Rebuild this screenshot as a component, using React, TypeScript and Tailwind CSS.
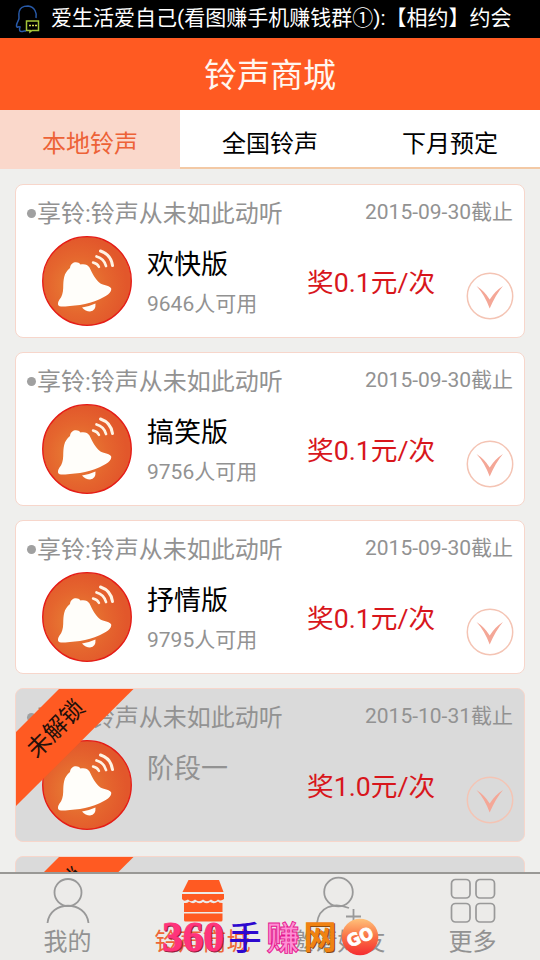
import React from "react";

type Ring = { name: string; count?: string; date: string; reward: string; locked?: boolean };

const rings: Ring[] = [
  { name: "欢快版", count: "9646人可用", date: "2015-09-30截止", reward: "奖0.1元/次" },
  { name: "搞笑版", count: "9756人可用", date: "2015-09-30截止", reward: "奖0.1元/次" },
  { name: "抒情版", count: "9795人可用", date: "2015-09-30截止", reward: "奖0.1元/次" },
  { name: "阶段一", date: "2015-10-31截止", reward: "奖1.0元/次", locked: true },
  { name: "阶段二", date: "2015-10-31截止", reward: "奖1.0元/次", locked: true },
];

function BellIcon() {
  return (
    <svg width="92" height="92" viewBox="0 0 92 92" className="shrink-0">
      <defs>
        <radialGradient id="bell" cx="0.4" cy="0.55" r="0.55">
          <stop offset="0" stopColor="#e88436" />
          <stop offset="0.6" stopColor="#e5662e" />
          <stop offset="1" stopColor="#e2572b" />
        </radialGradient>
      </defs>
      <circle cx="46" cy="46" r="44.3" fill="url(#bell)" stroke="#e51c17" strokeWidth="1.3" />
      <path
        d="M29 33C29.500 26.500 37 25.500 39.500 29.500C43 28.500 47 29.500 48.500 32.500C51 38 54.500 45 59.500 48.500C63.500 50.500 69.500 51 70.200 53.500C71 57.500 65 61.500 58 64.500C47 69.500 31 71.500 20 71.500C16 71.500 16.500 67.500 18.500 64.500C21 61.500 22 58 22.200 53C22.500 44 22.500 38.500 29 33Z"
        fill="#fffefa"
      />
      <path d="M41 72.500Q48 71.500 54.500 68.500Q55 76 49 76.500Q44.500 76.500 41 72.500Z" fill="#fffefa" />
      <g fill="none" stroke="#fff3e4" strokeLinecap="round">
        <path d="M52 27.500Q56.500 28.500 58 32" strokeWidth="2.400" />
        <path d="M55.500 21.500Q63 23.500 65 31" strokeWidth="2.700" />
        <path d="M59.500 16Q70 19.500 71.500 30.500" strokeWidth="3" />
      </g>
    </svg>
  );
}

function ExpandIcon() {
  return (
    <svg width="48" height="48" viewBox="0 0 48 48">
      <circle cx="24" cy="24" r="22.700" fill="none" stroke="#f4c4b4" strokeWidth="1.500" />
      <path d="M10.500 14Q18.500 19 23.700 27.500Q29 19 37 14Q30 22 23.700 36.500Q18.500 22.500 10.500 14Z" fill="#f4a797" />
    </svg>
  );
}

function Ribbon() {
  return (
    <div className="absolute -left-px -top-px h-[120px] w-[120px]">
      <svg width="120" height="120" viewBox="0 0 120 120">
        <path d="M45 0H119.500L0 119V45Z" fill="#ff5a22" />
        <text
          x="41"
          y="48.500"
          transform="rotate(-45 41 41)"
          textAnchor="middle"
          fontSize="23.500"
          fill="#24100a"
        >
          未解锁
        </text>
      </svg>
    </div>
  );
}

function Card({ ring }: { ring: Ring }) {
  const skin = ring.locked ? "bg-[#dadada]" : "bg-white";
  return (
    <article className={`relative h-[154px] shrink-0 overflow-hidden rounded-[8px] border border-[#f7d6cb] ${skin}`}>
      <div className="flex h-[50px] items-start justify-between pl-[11px] pr-[11px] pt-[12px] text-[#929292]">
        <span className="flex text-[24px] leading-[34px]">
          <span className="mr-[1px] mt-[12px] size-[9px] rounded-full bg-[#a0a0a0]" />
          享铃:铃声从未如此动听
        </span>
        <span className="text-[21px] leading-[30px]">{ring.date}</span>
      </div>
      <div className="flex pl-[25px]">
        <BellIcon />
        <div className="ml-[14px] w-[160px] pt-[11px]">
          <div className={`text-[27px] leading-[38px] ${ring.locked ? "text-[#929292]" : "text-black"}`}>{ring.name}</div>
          <div className="mt-[5px] text-[21px] leading-[30px] text-[#929292]">{ring.count}</div>
        </div>
        <div className="w-[159px] pt-[28px] text-[26.7px] leading-[40px] text-[#d8161c]">{ring.reward}</div>
        <div className="pt-[37px]">
          <ExpandIcon />
        </div>
      </div>
      {ring.locked && <Ribbon />}
    </article>
  );
}

function PersonIcon() {
  return (
    <svg width="60" height="51" viewBox="0 0 60 51" fill="none" stroke="#999" strokeWidth="1.800">
      <circle cx="30" cy="18.500" r="13.500" />
      <path d="M9.500 49C12 26 48 26 50.500 49" />
    </svg>
  );
}

function ShopIcon() {
  return (
    <svg width="60" height="51" viewBox="0 0 60 51" fill="#ff5a22">
      <path d="M15.500 6H46L50.500 18H9.500Z" />
      <path d="M9 20H51V25Q48 27.500 45 25.500Q42 29 38 25.500Q34 29 30 25.500Q26 29 22 25.500Q18 29 15 25.500Q11 28 9 25Z" />
      <path d="M11 29Q15 29 16 27.500Q20 30.500 23 28Q27 30.500 30 28Q34 30.500 37 28Q41 30.500 45 27.500Q46 29 49.500 29V38H11Z" />
      <path d="M11 39.500H49.500V46Q49.500 47.500 48 47.500H12.500Q11 47.500 11 46Z" />
    </svg>
  );
}

function InviteIcon() {
  return (
    <svg width="60" height="51" viewBox="0 0 60 51" fill="none" stroke="#999" strokeWidth="1.800">
      <circle cx="30.500" cy="18" r="14.300" />
      <path d="M9 49C11 33 25 28 41 34M45.500 35V51M38 42.500H53" />
    </svg>
  );
}

function GridIcon() {
  return (
    <svg width="60" height="51" viewBox="0 0 60 51" fill="none" stroke="#999" strokeWidth="1.700">
      <rect x="8.500" y="5.500" width="18.500" height="18.500" rx="4" />
      <rect x="33" y="5.500" width="18.500" height="18.500" rx="4" />
      <rect x="8.500" y="29.500" width="18.500" height="18.500" rx="4" />
      <rect x="33" y="29.500" width="18.500" height="18.500" rx="4" />
    </svg>
  );
}

function Watermark() {
  return (
    <svg className="absolute bottom-0 left-[155px]" width="230" height="45" viewBox="155 915 230 45">
      <defs>
        <linearGradient id="ball" x1="0" y1="0" x2="0" y2="1">
          <stop offset="0" stopColor="#ffc27a" />
          <stop offset="0.5" stopColor="#fa7044" />
          <stop offset="1" stopColor="#f52c31" />
        </linearGradient>
      </defs>
      <g fontFamily="Liberation Serif, serif" fontWeight="700" fontSize="43">
        <text x="163" y="952" textLength="62" lengthAdjust="spacingAndGlyphs" fill="#8c1737" stroke="#8c1737" strokeWidth="0.800">360</text>
        <text x="162" y="951" textLength="62" lengthAdjust="spacingAndGlyphs" fill="#ff347b" stroke="#ff347b" strokeWidth="0.800">360</text>
      </g>
      <g fontSize="33" fontWeight="700" fontFamily="Noto Sans CJK SC, sans-serif">
        <text x="228.500" y="949.500" fill="#2d08cf" fontWeight="500">手</text>
        <text x="266.500" y="949.500" fill="#ff8fd4" stroke="#e5178f" strokeWidth="0.900">赚</text>
        <text x="304.500" y="949.500" fill="#8b4b12">网</text>
        <text x="303.500" y="948.500" fill="#f08212">网</text>
      </g>
      <circle cx="360" cy="937" r="18.300" fill="url(#ball)" />
      <text
        x="360"
        y="943"
        transform="rotate(-22 360 937)"
        textAnchor="middle"
        fontSize="17"
        fontWeight="700"
        fontFamily="DejaVu Sans, sans-serif"
        textLength="27"
        lengthAdjust="spacingAndGlyphs"
        fill="white"
        stroke="white"
        strokeWidth="0.800"
      >
        GO
      </text>
    </svg>
  );
}

const nav = [
  { label: "我的", icon: <PersonIcon /> },
  { label: "铃声商城", icon: <ShopIcon />, active: true },
  { label: "邀请好友", icon: <InviteIcon /> },
  { label: "更多", icon: <GridIcon /> },
];

export default function App() {
  return (
    <div className="relative flex h-[960px] w-[540px] flex-col overflow-hidden bg-[#efefed] font-['Roboto','Noto_Sans_CJK_SC',sans-serif]">
      <div className="flex h-[38px] shrink-0 items-center bg-black pl-[15px] text-white">
        <svg width="26" height="30" viewBox="0 0 26 30" fill="none" strokeWidth="1.500">
          <path
            d="M9 27C4 29 4 25.500 5 23C3 22 2 24.500 1.500 22C1.500 18 4 17 4 14C2.500 2 10 2 13 2C20 3 22 9 21 14M9 27H11"
            stroke="#285aa9"
          />
          <path d="M11.500 17H23.500V26.500H17L15 28V26.500H11.500Z" stroke="#a5c639" />
          <path d="M14 21.500H16M17 21.500H19M20 21.500H22" stroke="#d6dd50" />
        </svg>
        <span className="-mt-[2px] ml-[10px] whitespace-nowrap text-[21px] leading-[30px]">爱生活爱自己(看图赚手机赚钱群①):【相约】约会</span>
      </div>
      <header className="flex h-[72px] shrink-0 items-center justify-center bg-[#ff5a22] pt-[4px] text-[33px] text-[#fff6ef]">铃声商城</header>
      <div className="flex h-[59px] shrink-0 text-center text-[24px] leading-[69px]">
        <div className="flex-1 bg-[#fad8cb] text-[#ed6237]">本地铃声</div>
        <div className="flex-1 border-b-2 border-[#f3c9a5] bg-white text-black">全国铃声</div>
        <div className="flex-1 border-b-2 border-[#f3c9a5] bg-white text-black">下月预定</div>
      </div>
      <main className="flex min-h-0 flex-1 flex-col gap-[14px] overflow-hidden px-[15px] pt-[15px]">
        {rings.map((ring) => (
          <Card key={ring.name} ring={ring} />
        ))}
      </main>
      <nav className="flex h-[88px] shrink-0 border-t-2 border-[#999895] bg-[#ecebe9]">
        {nav.map((item) => (
          <div key={item.label} className="flex flex-1 flex-col items-center">
            {item.icon}
            <span className={`text-[24px] leading-[34px] ${item.active ? "text-[#ee6636]" : "text-[#929292]"}`}>{item.label}</span>
          </div>
        ))}
      </nav>
      <Watermark />
    </div>
  );
}
